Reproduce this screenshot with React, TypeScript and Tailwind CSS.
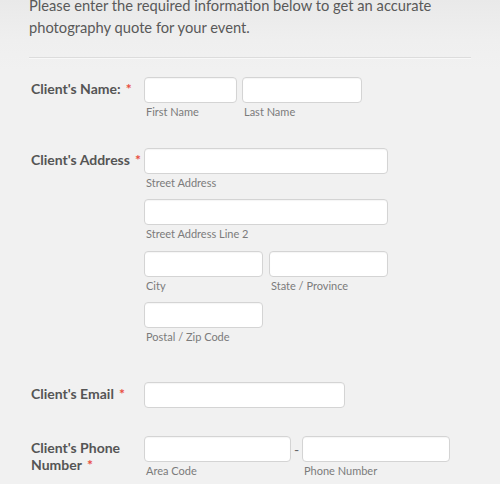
import type { ReactNode } from "react";

function Req() {
  return <span className="ml-[5px] text-[#e84c3d]">*</span>;
}

function Box({ w }: { w: string }) {
  return (
    <div
      className={`${w} h-[26px] rounded-[4px] border border-[#d4d4d4] bg-white shadow-[inset_0_1px_1px_rgba(0,0,0,0.04)]`}
    />
  );
}

function Sub({ children }: { children: ReactNode }) {
  return <div className="pl-[2px] pt-[1px] text-[11px] leading-[15px] text-[#7b7b7b]">{children}</div>;
}

function Field({ w, label }: { w: string; label: string }) {
  return (
    <div className={w}>
      <Box w="w-full" />
      <Sub>{label}</Sub>
    </div>
  );
}

function Row({ label, children, className = "" }: { label: ReactNode; children: ReactNode; className?: string }) {
  return (
    <div className={`flex ${className}`}>
      <div className="w-[115px] shrink-0 pl-[2px] pt-[3px] text-[14px] font-bold leading-[17px] text-[#555555]">
        {label}
      </div>
      <div className="flex flex-col">{children}</div>
    </div>
  );
}

export default function App() {
  return (
    <div
      className="h-[484px] w-[500px] overflow-hidden bg-[linear-gradient(to_bottom,#e9e9e9_0px,#efefef_40px,#f1f1f1_70px)] px-[29px]"
      style={{ fontFamily: "Lato, 'Open Sans', sans-serif" }}
    >
      <p className="mt-[-6px] text-[14.7px] leading-[22px] text-[#595959]">
        Please enter the required information below to get an accurate photography quote for your event.
      </p>
      <div className="mt-[19px] h-[2px] w-[442px] border-t border-[#dcdcdc] border-b border-b-[#f8f8f8]" />

      <Row className="mt-[18px]" label={<>Client's Name:<Req /></>}>
        <div className="flex gap-[5px]">
          <Field w="w-[93px]" label="First Name" />
          <Field w="w-[120px]" label="Last Name" />
        </div>
      </Row>

      <Row className="mt-[29px]" label={<>Client's Address<Req /></>}>
        <Field w="w-[244px]" label="Street Address" />
        <div className="mt-[9px]">
          <Field w="w-[244px]" label="Street Address Line 2" />
        </div>
        <div className="mt-[10px] flex gap-[6px]">
          <Field w="w-[119px]" label="City" />
          <Field w="w-[119px]" label="State / Province" />
        </div>
        <div className="mt-[9px]">
          <Field w="w-[119px]" label="Postal / Zip Code" />
        </div>
      </Row>

      <Row className="mt-[38px]" label={<>Client's Email<Req /></>}>
        <Box w="w-[201px]" />
      </Row>

      <Row className="mt-[28px]" label={<>Client's Phone Number<Req /></>}>
        <div className="flex items-start">
          <Field w="w-[147px]" label="Area Code" />
          <div className="w-[11px] pt-[3px] text-center text-[14px] text-[#666]">-</div>
          <Field w="w-[148px]" label="Phone Number" />
        </div>
      </Row>
    </div>
  );
}
